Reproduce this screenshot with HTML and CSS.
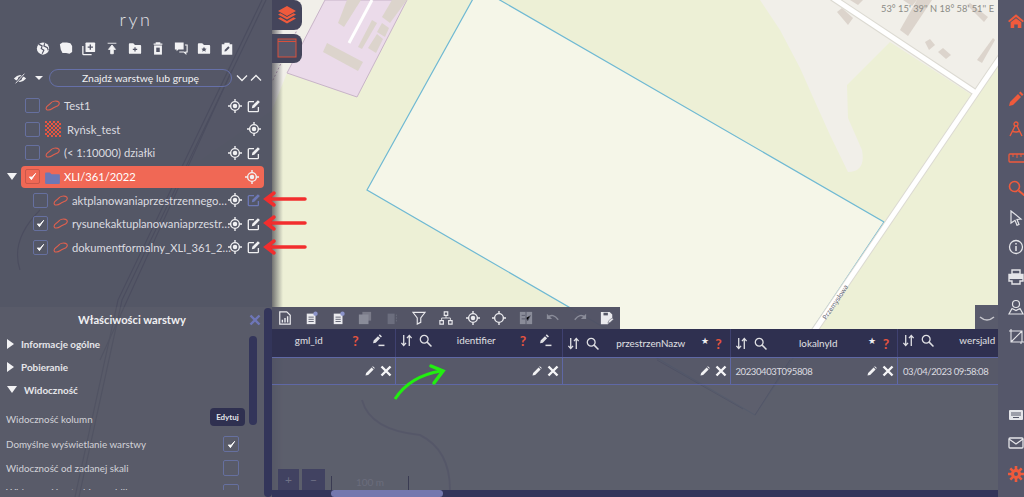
FILE: index.html
```html
<!DOCTYPE html>
<html lang="en">
<head>
    <meta charset="UTF-8">
    <meta name="viewport" content="width=device-width, initial-scale=1.0">
    <title>Właściwości warstwy</title>
    <link rel="stylesheet" href="styles.css">
</head>
<body>

<!-- shared icons -->
<svg class="defs" width="0" height="0">
    <defs>
        <pattern id="hatch" width="4" height="4" patternUnits="userSpaceOnUse">
            <rect width="2" height="2" fill="#e8563f"/>
            <rect x="2" y="2" width="2" height="2" fill="#e8563f"/>
        </pattern>
    </defs>
    <symbol id="i-shape" viewBox="0 0 16 12"><path d="M1 9c0-3 3-3 4.500-5s5-3.500 8-2.500 2 4 0 5-4 1.500-6 3-6.500 2.500-6.500-.5z" fill="none" stroke="currentColor" stroke-width="1.200"/></symbol>
    <symbol id="i-target" viewBox="0 0 16 16"><circle cx="8" cy="8" r="5" fill="none" stroke="currentColor" stroke-width="1.600"/><circle cx="8" cy="8" r="2.600" fill="currentColor"/><path d="M8 0v3M8 13v3M0 8h3M13 8h3" stroke="currentColor" stroke-width="1.600"/></symbol>
    <symbol id="i-edit" viewBox="0 0 16 16"><path d="M13 9v4.500a1 1 0 0 1-1 1H2.500a1 1 0 0 1-1-1V4a1 1 0 0 1 1-1H8" fill="none" stroke="currentColor" stroke-width="1.500"/><path d="M5.500 10.500l.6-2.800 6.400-6.400 2.200 2.200-6.400 6.400z" fill="currentColor"/></symbol>
    <symbol id="i-check" viewBox="0 0 10 10"><path d="M1.500 5.500l2.300 3 4.700-7-3.900 4.300z" fill="#fff" stroke="#fff" stroke-width="1" stroke-linejoin="round"/></symbol>
    <symbol id="i-sort" viewBox="0 0 14 14"><path d="M4 1v11M1.500 9.500L4 12.500l2.500-3M10 13V2M7.500 4.500L10 1.500l2.500 3" fill="none" stroke="currentColor" stroke-width="1.400"/></symbol>
    <symbol id="i-search" viewBox="0 0 12 12"><circle cx="4.800" cy="4.800" r="3.600" fill="none" stroke="currentColor" stroke-width="1.200"/><path d="M7.500 7.500l4 4" stroke="currentColor" stroke-width="1.400"/></symbol>
    <symbol id="i-pen-line" viewBox="0 0 12 12"><path d="M1 8.500l.5-2.500 4-4 2 2-4 4z M6.200 1.300l1-1 2 2-1 1z" fill="currentColor"/><path d="M6 10.500h5.500" stroke="currentColor" stroke-width="1.400"/></symbol>
    <symbol id="i-pen" viewBox="0 0 10 10"><path d="M.5 9.500l.6-2.600 5.500-5.500 2 2-5.500 5.500z M7.200.8l.7-.6 1.900 1.900-.6.7z" fill="currentColor"/></symbol>
    <symbol id="i-x" viewBox="0 0 12 12"><path d="M1.500 1.500l9 9M10.500 1.500l-9 9" stroke="currentColor" stroke-width="2.400"/></symbol>
    <symbol id="i-folder-plus" viewBox="0 0 16 14"><path d="M1 2a1 1 0 0 1 1-1h4l2 2h6a1 1 0 0 1 1 1v8a1 1 0 0 1-1 1H2a1 1 0 0 1-1-1z" fill="currentColor"/><path d="M8 5.500v5M5.500 8h5" stroke="#535566" stroke-width="1.400"/></symbol>
</svg>

<div class="app">
    <!-- map background -->
    <svg class="map" viewBox="0 0 1024 497" aria-hidden="true">
        <rect width="1024" height="497" fill="#edf0d6"/>
        <path d="M200 0H335L287 73L272 110L200 160Z" fill="#f1efe9"/>
        <path d="M780 30L800 68L812 95L830 135L848 172Q866 172 862 150L848 118L847 85L870 62L890 42L975 97L1024 30V0H760Z" fill="#f1efe9"/>
        <path d="M325 0H407L357 97L287 73Z" fill="#ebdbea" stroke="#c8b4c8"/>
        <g fill="#dcd4cc">
            <path d="M347 0H361L344 27L338 23Z"/>
            <path d="M392 0H407L390 23L382 17Z"/>
            <path d="M372 20L377 23L362 49L358 47Z"/>
            <path d="M382 23L389 28L385 37L377 32Z"/>
            <path d="M377 34L383 39L376 53L368 48Z"/>
            <path d="M327 43L363 62L358 71L323 52Z"/>
            <path d="M837 12L842 8L853 18L848 25Z"/>
            <path d="M850 0H863L858 5Z"/>
            <path d="M900 30L917 0H932L908 36Z"/>
            <path d="M903 0H917L912 6Z"/>
            <path d="M925 42L930 39L935 45L929 50Z"/>
            <path d="M938 52L943 48L951 55L946 59Z"/>
            <path d="M977 60L993 38L995 40L982 63Z"/>
            <path d="M967 5L970 3L988 17L984 22Z"/>
        </g>
        <path d="M372 0L349 43" stroke="#fff" stroke-width="3" fill="none"/>
        <path d="M479 -12L884 222L755 415L367 190Z" fill="#f5f6e8" stroke="#6fb9d3" stroke-width="1.200"/>
        <g fill="none" stroke-linecap="round">
            <path d="M833 -2L973 91M1004 52L800 352" stroke="#dcdad2" stroke-width="7"/>
            <path d="M833 -2L973 91M1004 52L800 352" stroke="#fff" stroke-width="5"/>
        </g>
        <text class="road-label" x="0" y="0" transform="translate(826 320) rotate(-56)">Przemysłowa</text>
        <path d="M298 28L272 82" stroke="#b59ab5" stroke-dasharray="2 2"/>
        <!-- railway and roads seen through the panels -->
        <g fill="none" stroke="#2c2d3d" stroke-width="1.200" opacity=".9">
            <path d="M262 0L118 300L75 497"/>
            <path d="M266 0L122 300L79 497"/>
            <path d="M232 70L100 360"/>
            <path d="M20 270Q10 240 40 210"/>
        </g>
        <g fill="none" stroke="#6a6c90" stroke-width="2">
            <path d="M362 400Q370 430 420 435Q450 450 450 490"/>
            <path d="M743 409L657 360M755 415L790 360" stroke="#3c4a78" stroke-width="1"/>
        </g>
    </svg>

    <div class="layout">
        <aside class="sidebar">
            <section class="layers">
                <h1 class="app-title">ryn</h1>
                <div class="tools">
                    <svg viewBox="0 0 16 16"><circle cx="8" cy="8" r="7" fill="currentColor"/><path d="M3 3l4 2-1 3 3 2-2 4M10 2l-1 3 4 2 1 3" fill="none" stroke="#535566" stroke-width="1.300"/></svg>
                    <svg viewBox="0 0 16 16"><path d="M1 3l3-2 5 0 4 1 2 3 0 7-3 2-4-1-4 0-2-4z" fill="currentColor"/></svg>
                    <svg viewBox="0 0 16 16"><path d="M1 5v9a1 1 0 0 0 1 1h9" fill="none" stroke="currentColor" stroke-width="1.500"/><rect x="4" y="1" width="11" height="11" rx="1" fill="currentColor"/><path d="M9.500 3.500v6M6.500 6.500h6" stroke="#535566" stroke-width="1.500"/></svg>
                    <svg viewBox="0 0 16 16"><path d="M3 2h10M8 4l-4 5h2.500v5h3V9H12z" fill="currentColor" stroke="currentColor" stroke-width="1"/></svg>
                    <svg viewBox="0 0 16 14"><use href="#i-folder-plus"/></svg>
                    <svg viewBox="0 0 16 16"><path d="M3 3h10M6 3V1.500h4V3" stroke="currentColor" stroke-width="1.300" fill="none"/><path d="M3.500 4.500h9V15h-9z" fill="currentColor"/><rect x="6" y="7" width="4" height="5" fill="#535566"/></svg>
                    <svg viewBox="0 0 16 16"><path d="M1 1h10v8H5l-2 2V9H1z" fill="currentColor"/><path d="M12.500 4H15v8h-1.500v2l-2-2H6" fill="none" stroke="currentColor" stroke-width="1.300"/></svg>
                    <svg viewBox="0 0 16 14"><path d="M1 2a1 1 0 0 1 1-1h4l2 2h6a1 1 0 0 1 1 1v8a1 1 0 0 1-1 1H2a1 1 0 0 1-1-1z" fill="currentColor"/><path d="M8 5l1 2 2 .2-1.500 1.400.5 2.200-2-1.100-2 1.100.5-2.200L5 7.200 7 7z" fill="#535566"/></svg>
                    <svg viewBox="0 0 16 16"><path d="M2 3h3V1.500h6V3h3v12H2z" fill="currentColor"/><path d="M5 11.500l.5-2 4-4 1.500 1.500-4 4z" fill="#535566"/></svg>
                </div>
                <div class="search-row">
                    <svg class="eye" viewBox="0 0 16 12"><path d="M1 6q7-8 14 0q-7 8-14 0z" fill="currentColor"/><circle cx="8" cy="6" r="2.200" fill="#535566"/><path d="M3 11L13 1" stroke="#535566" stroke-width="2.500"/><path d="M3 11.500L13 .5" stroke="currentColor" stroke-width="1"/></svg>
                    <span class="caret-down small"></span>
                    <div class="search-pill">Znajdź warstwę lub grupę</div>
                    <svg class="chev" viewBox="0 0 12 8"><path d="M1 1.500L6 6.500L11 1.500" fill="none" stroke="currentColor" stroke-width="1.300"/></svg>
                    <svg class="chev" viewBox="0 0 12 8"><path d="M1 6.500L6 1.500L11 6.500" fill="none" stroke="currentColor" stroke-width="1.300"/></svg>
                </div>

                <ul class="tree">
                    <li class="row">
                        <span class="box"></span>
                        <svg class="shape"><use href="#i-shape"/></svg>
                        <span class="name">Test1</span>
                        <svg class="act"><use href="#i-target"/></svg>
                        <svg class="act"><use href="#i-edit"/></svg>
                    </li>
                    <li class="row">
                        <span class="box"></span>
                        <svg class="hatch" viewBox="0 0 16 16"><rect width="16" height="16" fill="url(#hatch)"/></svg>
                        <span class="name">Ryńsk_test</span>
                        <svg class="act"><use href="#i-target"/></svg>
                    </li>
                    <li class="row">
                        <span class="box"></span>
                        <svg class="shape"><use href="#i-shape"/></svg>
                        <span class="name">(&lt; 1:10000) działki</span>
                        <svg class="act"><use href="#i-target"/></svg>
                        <svg class="act"><use href="#i-edit"/></svg>
                    </li>
                    <li class="row row-group">
                        <span class="caret-down"></span>
                        <div class="group-bar">
                            <span class="box checked"><svg><use href="#i-check"/></svg></span>
                            <svg class="folder" viewBox="0 0 16 13"><path d="M0 1.500a1 1 0 0 1 1-1h4l2 2h8a1 1 0 0 1 1 1V12a1 1 0 0 1-1 1H1a1 1 0 0 1-1-1z" fill="#6d78b5"/></svg>
                            <span class="name">XLI/361/2022</span>
                            <svg class="act"><use href="#i-target"/></svg>
                        </div>
                    </li>
                    <li class="row row-child">
                        <span class="box"></span>
                        <svg class="shape"><use href="#i-shape"/></svg>
                        <span class="name">aktplanowaniaprzestrzennego…</span>
                        <svg class="act"><use href="#i-target"/></svg>
                        <svg class="act act-off"><use href="#i-edit"/></svg>
                    </li>
                    <li class="row row-child">
                        <span class="box"><svg><use href="#i-check"/></svg></span>
                        <svg class="shape"><use href="#i-shape"/></svg>
                        <span class="name">rysunekaktuplanowaniaprzestr…</span>
                        <svg class="act"><use href="#i-target"/></svg>
                        <svg class="act"><use href="#i-edit"/></svg>
                    </li>
                    <li class="row row-child">
                        <span class="box"><svg><use href="#i-check"/></svg></span>
                        <svg class="shape"><use href="#i-shape"/></svg>
                        <span class="name">dokumentformalny_XLI_361_2…</span>
                        <svg class="act"><use href="#i-target"/></svg>
                        <svg class="act"><use href="#i-edit"/></svg>
                    </li>
                </ul>
            </section>

            <section class="props">
                <div class="props-main">
                    <div class="props-head">
                        <h2>Właściwości warstwy</h2>
                        <svg class="props-close"><use href="#i-x"/></svg>
                    </div>
                    <div class="props-body">
                        <div class="props-content">
                            <div class="acc"><span class="caret-right"></span>Informacje ogólne</div>
                            <div class="acc"><span class="caret-right"></span>Pobieranie</div>
                            <div class="acc"><span class="caret-down"></span>Widoczność</div>
                            <div class="prop prop-first">Widoczność kolumn <button class="edit-btn">Edytuj</button></div>
                            <div class="prop">Domyślne wyświetlanie warstwy <span class="box"><svg><use href="#i-check"/></svg></span></div>
                            <div class="prop">Widoczność od zadanej skali <span class="box"></span></div>
                            <div class="prop">Widoczność w trybie opublikowanym <span class="box"></span></div>
                        </div>
                        <div class="inner-scroll"></div>
                    </div>
                </div>
                <div class="props-scroll"></div>
            </section>
        </aside>

        <main class="center">
            <div class="float-btns">
                <div class="float-btn">
                    <svg viewBox="0 0 20 20" width="20" height="20"><path d="M10 1l9 5-9 5-9-5z M1 9.500l2.500-1.300L10 12l6.500-3.800L19 9.500l-9 5z M1 13.500l2.500-1.300L10 16l6.500-3.800L19 13.500l-9 5z" fill="#ef5a3c"/></svg>
                </div>
                <div class="float-btn">
                    <svg viewBox="0 0 20 20" width="20" height="20"><rect x="1" y="1" width="18" height="18" fill="#57586b" stroke="#d8503c" stroke-width="1"/><path d="M1 3.500h18" stroke="#d8503c"/></svg>
                </div>
            </div>
            <div class="coords">53° 15' 39'' N 18° 58' 51'' E</div>

            <div class="bottom">
                <div class="table-top">
                    <div class="table-tools">
                        <svg viewBox="0 0 14 16"><path d="M1 1h8l4 4v10H1z" fill="none" stroke="currentColor" stroke-width="1.400"/><path d="M4 13V10M7 13V8M10 13V6" stroke="currentColor" stroke-width="1.600"/></svg>
                        <svg viewBox="0 0 14 16"><rect x="1" y="3" width="10" height="12" fill="currentColor"/><path d="M3 7h6M3 9.500h6M3 12h6" stroke="#555768"/><circle cx="11" cy="3" r="2.500" fill="#8b93c9"/></svg>
                        <svg viewBox="0 0 14 16"><rect x="1" y="3" width="10" height="12" fill="currentColor"/><path d="M3 7h6M3 9.500h6M3 12h6" stroke="#555768"/><circle cx="11" cy="3" r="2.500" fill="#8b93c9"/></svg>
                        <svg class="dim" viewBox="0 0 16 16"><rect x="1" y="4" width="11" height="11" fill="currentColor"/><rect x="5" y="1" width="10" height="10" fill="currentColor" opacity=".7"/></svg>
                        <svg class="faint" viewBox="0 0 16 16"><path d="M3 3h8v12H3z" fill="currentColor"/><path d="M13 4v9" stroke="currentColor" stroke-dasharray="2 1"/></svg>
                        <svg viewBox="0 0 16 16"><path d="M1 1.500h14L10 8v5l-4 2V8z" fill="none" stroke="currentColor" stroke-width="1.300"/></svg>
                        <svg viewBox="0 0 16 16"><path d="M6 1h4v4H6zM1 11h4v4H1zM11 11h4v4h-4z" fill="none" stroke="currentColor" stroke-width="1.300"/><path d="M8 5v3M3 11V8h10v3" fill="none" stroke="currentColor"/></svg>
                        <svg><use href="#i-target"/></svg>
                        <svg viewBox="0 0 16 16"><circle cx="8" cy="8" r="5" fill="none" stroke="currentColor" stroke-width="1.600"/><path d="M8 0v3M8 13v3M0 8h3M13 8h3" stroke="currentColor" stroke-width="1.600"/></svg>
                        <svg class="dim" viewBox="0 0 16 16"><rect x="1" y="1" width="14" height="14" fill="currentColor"/><path d="M3 5h4M3 9h4M8 8l2 3 3-6M8 1v14" stroke="#555768"/></svg>
                        <svg class="dim" viewBox="0 0 16 12"><path d="M2 5q6-5 12 3" fill="none" stroke="currentColor" stroke-width="1.600"/><path d="M1 1v6h6z" fill="currentColor"/></svg>
                        <svg class="dim" viewBox="0 0 16 12"><path d="M14 5q-6-5-12 3" fill="none" stroke="currentColor" stroke-width="1.600"/><path d="M15 1v6H9z" fill="currentColor"/></svg>
                        <svg viewBox="0 0 16 16"><path d="M1 1h10l3 3v5l-5 6H1z" fill="currentColor"/><rect x="4" y="2" width="5" height="3" fill="#555768"/><path d="M9 14l1-3 4-3 1.500 1.500-4 3.500z" fill="currentColor" stroke="#555768" stroke-width=".6"/></svg>
                    </div>
                    <button class="collapse">
                        <svg viewBox="0 0 16 6" width="16" height="6"><path d="M1 1q7 6 14 0" fill="none" stroke="currentColor" stroke-width="1.600"/></svg>
                    </button>
                </div>

                <div class="table-wrap">
                    <div class="table">
                        <div class="t-row t-head">
                            <div class="th">
                                <svg class="th-ic"><use href="#i-sort"/></svg><svg class="th-ic"><use href="#i-search"/></svg>
                                <span class="th-title">gml_id</span>
                                <span class="req">?</span><svg class="th-ic"><use href="#i-pen-line"/></svg>
                            </div>
                            <div class="th">
                                <svg class="th-ic"><use href="#i-sort"/></svg><svg class="th-ic"><use href="#i-search"/></svg>
                                <span class="th-title">identifier</span>
                                <span class="req">?</span><svg class="th-ic"><use href="#i-pen-line"/></svg>
                            </div>
                            <div class="th th-low">
                                <svg class="th-ic"><use href="#i-sort"/></svg><svg class="th-ic"><use href="#i-search"/></svg>
                                <span class="th-title">przestrzenNazw</span>
                                <span class="star">★</span><span class="req">?</span>
                            </div>
                            <div class="th th-low">
                                <svg class="th-ic"><use href="#i-sort"/></svg><svg class="th-ic"><use href="#i-search"/></svg>
                                <span class="th-title">lokalnyId</span>
                                <span class="star">★</span><span class="req">?</span>
                            </div>
                            <div class="th th-last">
                                <svg class="th-ic"><use href="#i-sort"/></svg><svg class="th-ic"><use href="#i-search"/></svg>
                                <span class="th-title">wersjaId</span>
                            </div>
                        </div>
                        <div class="t-row t-body">
                            <div class="td"><span class="val"></span><svg class="td-pen"><use href="#i-pen"/></svg><svg class="td-x"><use href="#i-x"/></svg></div>
                            <div class="td"><span class="val"></span><svg class="td-pen"><use href="#i-pen"/></svg><svg class="td-x"><use href="#i-x"/></svg></div>
                            <div class="td"><span class="val"></span><svg class="td-pen"><use href="#i-pen"/></svg><svg class="td-x"><use href="#i-x"/></svg></div>
                            <div class="td"><span class="val">20230403T095808</span><svg class="td-pen"><use href="#i-pen"/></svg><svg class="td-x"><use href="#i-x"/></svg></div>
                            <div class="td"><span class="val">03/04/2023 09:58:08</span></div>
                        </div>
                    </div>
                </div>

                <div class="table-rest">
                    <div class="zoom-btn">+</div>
                    <div class="zoom-btn">−</div>
                    <div class="scale">100 m</div>
                </div>
                <div class="h-scroll"><div class="h-thumb"></div></div>
            </div>
        </main>

        <nav class="rightbar">
            <svg class="rb-home" viewBox="0 0 18 16"><path d="M9 .5L18 8l-1.500 1.500L9 3.500 1.500 9.500 0 8z" fill="#ef5a3c"/><path d="M3 9.500L9 5l6 4.500V16h-4v-4H7v4H3z" fill="#ef5a3c"/></svg>
            <div class="rb-main">
                <svg class="rb-red" viewBox="0 0 16 16"><path d="M1 15l1-4 8-8 3 3-8 8z M11 2l1.500-1.500 3 3L14 5z" fill="currentColor"/></svg>
                <svg class="rb-red" viewBox="0 0 16 16"><circle cx="8" cy="3" r="2" fill="none" stroke="currentColor" stroke-width="1.300"/><path d="M7 5L2 15M9 5l5 10M4 10q4 2 8 0" fill="none" stroke="currentColor" stroke-width="1.400"/></svg>
                <svg class="rb-red rb-wide" viewBox="0 0 20 10"><rect x="1" y="1" width="22" height="8" rx="1" fill="none" stroke="currentColor" stroke-width="1.300"/><path d="M5 1v3M9 1v4M13 1v3M17 1v4" stroke="currentColor"/></svg>
                <svg class="rb-red" viewBox="0 0 16 16"><circle cx="6.500" cy="6.500" r="5" fill="none" stroke="currentColor" stroke-width="1.600"/><path d="M10.500 10.500l6 5" stroke="currentColor" stroke-width="2"/></svg>
                <svg viewBox="0 0 16 16"><path d="M3 1l10 8-4 .5 2 5-2 .8-2-5L3 13z" fill="none" stroke="currentColor" stroke-width="1.200"/></svg>
                <svg viewBox="0 0 16 16"><circle cx="8" cy="8" r="6.500" fill="none" stroke="currentColor" stroke-width="1.300"/><path d="M8 7v5M8 4v1.500" stroke="currentColor" stroke-width="1.500"/></svg>
                <svg viewBox="0 0 16 16"><path d="M4 1h8v4H4zM1 5.500h14V12h-3v3H4v-3H1z" fill="none" stroke="currentColor" stroke-width="1.400"/><path d="M1 6h14v4H1z" fill="currentColor"/></svg>
                <svg viewBox="0 0 16 16"><circle cx="8" cy="5" r="3.500" fill="none" stroke="currentColor" stroke-width="1.200"/><path d="M4 9.500L1 15h14l-3-5.500-4 2z" fill="none" stroke="currentColor" stroke-width="1.200"/></svg>
                <svg viewBox="0 0 16 16"><path d="M3 2h11v11H3z M3 13L14 2M1 2h2M13 15v-2M3 0v2M14 13h2" fill="none" stroke="currentColor" stroke-width="1.100"/></svg>
            </div>
            <div class="rb-foot">
                <svg viewBox="0 0 16 12"><rect x="1" y="1" width="14" height="10" rx="1" fill="currentColor"/><path d="M3 4h10M3 6h10M5 8.500h6" stroke="#555768"/></svg>
                <svg viewBox="0 0 16 12"><rect x="1" y="1" width="14" height="10" rx="1" fill="none" stroke="currentColor" stroke-width="1.300"/><path d="M1 2l7 5 7-5" fill="none" stroke="currentColor" stroke-width="1.300"/></svg>
                <svg class="rb-red rb-gear" viewBox="0 0 16 16"><circle cx="8" cy="8" r="3.500" fill="none" stroke="currentColor" stroke-width="3"/><path d="M8 0v4M8 12v4M0 8h4M12 8h4M2.300 2.300l3 3M10.700 10.700l3 3M13.700 2.300l-3 3M5.300 10.700l-3 3" stroke="currentColor" stroke-width="2.600"/></svg>
            </div>
        </nav>
    </div>

    <!-- annotations drawn on top of the screenshot -->
    <svg class="notes" viewBox="0 0 1024 497" aria-hidden="true">
        <g fill="none" stroke="#f22e2e" stroke-width="3.500" stroke-linecap="round">
            <path d="M268 199H305M274 193L266 199L274 205"/>
            <path d="M268 223H305M274 217L266 223L274 229"/>
            <path d="M268 247H305M274 241L266 247L274 253"/>
        </g>
        <path d="M395 399Q410 376 441 371" fill="none" stroke="#22ee11" stroke-width="3"/>
        <path d="M431 366L443 371L434 383" fill="none" stroke="#22ee11" stroke-width="3.500" stroke-linecap="round"/>
    </svg>
</div>

</body>
</html>
```

FILE: styles.css
```css
* {
    box-sizing: border-box;
}
html, body {
    margin: 0;
    padding: 0;
}
body {
    font-family: Lato, "Open Sans", sans-serif;
    color: #dcdce0;
    font-size: 12px;
}
.defs {
    display: block;
    height: 0;
}
.app {
    position: relative;
    width: 1024px;
    height: 497px;
    overflow: hidden;
}
.map, .notes {
    position: absolute;
    left: 0;
    top: 0;
    width: 1024px;
    height: 497px;
}
.notes {
    pointer-events: none;
}
.road-label {
    font-family: "Noto Sans", sans-serif;
    font-size: 6.500px;
    fill: #5f6470;
}
.layout {
    position: relative;
    display: flex;
    height: 100%;
}

/* sidebar */
.sidebar {
    width: 272px;
    display: flex;
    flex-direction: column;
    flex-shrink: 0;
}
.layers {
    height: 307px;
    background-color: rgba(76, 78, 96, 0.95);
}
.app-title {
    margin: 0;
    padding-top: 9px;
    height: 38px;
    font-size: 18px;
    font-weight: 300;
    letter-spacing: 2.5px;
    text-align: center;
    color: #e2e2e6;
    line-height: 20px;
}
.tools {
    display: flex;
    gap: 9px;
    padding-left: 36px;
    height: 20px;
    align-items: center;
    color: #f2f2f4;
}
.tools svg {
    width: 14px;
    height: 15px;
}
.search-row {
    display: flex;
    align-items: center;
    height: 18px;
    margin-top: 11px;
    padding-left: 13px;
    color: #f0f0f2;
}
.eye {
    width: 14px;
    height: 11px;
}
.search-pill {
    width: 183px;
    height: 18px;
    margin-left: 6px;
    margin-right: 2px;
    border: 1px solid #6670a8;
    border-radius: 9px;
    text-align: center;
    line-height: 16px;
    font-size: 10.400px;
}
.chev {
    width: 12px;
    height: 8px;
    margin-left: 2px;
}
.caret-down, .caret-right {
    display: inline-block;
    width: 0;
    height: 0;
}
.caret-down {
    border-left: 5px solid transparent;
    border-right: 5px solid transparent;
    border-top: 7px solid #f2f2f4;
}
.caret-down.small {
    margin-left: 8px;
    border-left-width: 4px;
    border-right-width: 4px;
    border-top-width: 4px;
}
.caret-right {
    border-top: 5px solid transparent;
    border-bottom: 5px solid transparent;
    border-left: 7px solid #f2f2f4;
}
.tree {
    list-style: none;
    margin: 7px 0 0;
    padding: 0;
}
.row {
    display: flex;
    align-items: center;
    height: 23.600px;
    padding-left: 25px;
    padding-right: 11px;
}
.row-child {
    padding-left: 33px;
}
.row-group {
    padding-left: 7px;
    padding-right: 8px;
}
.group-bar {
    display: flex;
    align-items: center;
    flex: 1;
    height: 22px;
    margin-left: 4px;
    padding-left: 4px;
    padding-right: 5px;
    background-color: #f06855;
    border-radius: 4px;
    color: #fff;
}
.box {
    display: inline-flex;
    align-items: center;
    justify-content: center;
    width: 15px;
    height: 15px;
    border: 1px solid #66709f;
    border-radius: 2px;
    flex-shrink: 0;
}
.box svg {
    width: 9px;
    height: 9px;
}
.box.checked {
    border-color: #c9574a;
}
.shape {
    width: 15px;
    height: 11px;
    margin-left: 5px;
    color: #e0604e;
    flex-shrink: 0;
}
.hatch {
    width: 16px;
    height: 16px;
    margin-left: 5px;
    flex-shrink: 0;
}
.folder {
    width: 15px;
    height: 12px;
    margin-left: 5px;
    margin-top: 2px;
    flex-shrink: 0;
}
.name {
    flex: 1;
    min-width: 0;
    padding-left: 4px;
    white-space: nowrap;
    font-size: 11.200px;
}
.hatch + .name {
    padding-left: 6px;
}
.act {
    width: 14px;
    height: 14px;
    margin-left: 5px;
    flex-shrink: 0;
    color: #f0f0f2;
}
.act-off {
    color: #6d78b5;
}

/* properties panel */
.props {
    flex: 1;
    display: flex;
    min-height: 0;
    background-color: rgba(82, 84, 100, 0.96);
}
.props-main {
    flex: 1;
    min-width: 0;
    display: flex;
    flex-direction: column;
}
.props-head {
    display: flex;
    align-items: center;
    justify-content: center;
    position: relative;
    height: 25px;
}
.props-head h2 {
    margin: 0;
    font-size: 11.200px;
    font-weight: 700;
    color: #f0f0f2;
}
.props-close {
    position: absolute;
    right: 3px;
    top: 7px;
    width: 12px;
    height: 12px;
    color: #6e76b8;
}
.props-body {
    flex: 1;
    display: flex;
    min-height: 0;
    overflow: hidden;
}
.props-content {
    flex: 1;
    min-width: 0;
    padding-left: 6px;
    padding-right: 4px;
    height: 158px;
    overflow: hidden;
}
.acc {
    display: flex;
    align-items: center;
    gap: 7px;
    height: 23px;
    padding-left: 1px;
    font-weight: 700;
    font-size: 9.900px;
    color: #e6e6ea;
}
.prop {
    display: flex;
    align-items: center;
    justify-content: space-between;
    height: 24px;
    padding-right: 6px;
    font-size: 9.800px;
    color: #d2d2d8;
}
.prop .box {
    width: 16px;
    height: 16px;
}
.prop-first {
    margin-top: 5px;
    padding-right: 0;
    height: 26px;
}
.edit-btn {
    width: 35px;
    height: 18px;
    margin-bottom: 4px;
    padding: 0;
    border: 0;
    border-radius: 4px;
    background-color: #2f3050;
    color: #e4e4e8;
    font-family: inherit;
    font-size: 8px;
    font-weight: 700;
}
.inner-scroll {
    width: 8px;
    height: 89px;
    margin-top: 4px;
    margin-right: 7px;
    background-color: #33355a;
    border-radius: 4px;
}
.props-scroll {
    width: 8px;
    margin-top: 1px;
    background-color: #33355a;
    border-radius: 4px;
}

/* center */
.center {
    position: relative;
    flex: 1;
    min-width: 0;
    display: flex;
    flex-direction: column;
    background: linear-gradient(to right, rgba(60, 60, 70, 0.7), rgba(60, 60, 70, 0) 11px);
}
.float-btns {
    display: flex;
    flex-direction: column;
    gap: 4px;
    width: 30px;
}
.float-btn {
    display: flex;
    align-items: center;
    justify-content: center;
    width: 30px;
    height: 29.500px;
    background-color: #44455b;
    border-radius: 0 8px 8px 0;
}
.coords {
    position: absolute;
    right: 4px;
    top: 3px;
    font-size: 9.300px;
    color: #8b8b86;
}
.bottom {
    margin-top: auto;
    height: 190px;
    display: flex;
    flex-direction: column;
}
.table-top {
    display: flex;
    justify-content: space-between;
    align-items: flex-end;
    height: 22px;
}
.table-tools {
    display: flex;
    align-items: center;
    gap: 12.800px;
    width: 348px;
    height: 22px;
    padding-left: 6px;
    background-color: rgba(78, 80, 98, 0.97);
    color: #eaeaee;
}
.table-tools svg {
    width: 14px;
    height: 14px;
    flex-shrink: 0;
}
.table-tools .dim {
    color: #8a8c99;
}
.table-tools .faint {
    color: #6c6e7e;
}
.collapse {
    width: 23px;
    height: 24px;
    padding: 0;
    border: 0;
    background-color: #595b6c;
    color: #c6c6cc;
}
.table-wrap {
    overflow: hidden;
    background-color: rgba(80, 82, 100, 0.96);
}
.table {
    width: 838px;
    margin-left: -45px;
}
.t-row {
    display: flex;
}
.t-head {
    height: 29px;
    background-color: #2f3050;
    border-bottom: 1px solid #5f68a5;
}
.t-body {
    height: 27px;
    border-bottom: 1px solid #5f68a5;
}
.th, .td {
    width: 167.500px;
    flex-shrink: 0;
    display: flex;
    align-items: center;
    padding-left: 4px;
    padding-right: 6px;
    border-left: 1px solid #3f4170;
}
.td {
    border-left-color: #5f68a5;
    padding-left: 5px;
    padding-right: 3px;
}
.th {
    padding-bottom: 6px;
    color: #e0e0e4;
}
.th-low {
    padding-bottom: 0;
}
.th-ic {
    width: 13px;
    height: 13px;
    margin-right: 9px;
    flex-shrink: 0;
}
.th-ic:first-child {
    margin-right: 6px;
}
.th-title {
    flex: 1;
    min-width: 0;
    padding-right: 6px;
    text-align: center;
    font-size: 9.800px;
    white-space: nowrap;
}
.th-last .th-title {
    padding-right: 47px;
}
.th-ic:last-child {
    margin-right: 4px;
    margin-left: 11px;
}
.req {
    width: 10px;
    color: #e2533f;
    font-size: 14px;
    font-weight: 700;
    text-align: center;
}
.star {
    width: 10px;
    margin-right: 4px;
    margin-top: -6px;
    font-size: 9px;
    color: #f0f0f2;
    text-align: center;
}
.val {
    flex: 1;
    min-width: 0;
    font-size: 9.500px;
    letter-spacing: -.4px;
    white-space: nowrap;
    color: #dcdce0;
}
.td-pen {
    width: 10px;
    height: 10px;
    color: #f2f2f4;
    flex-shrink: 0;
}
.td-x {
    width: 12px;
    height: 12px;
    margin-left: 5px;
    color: #f6f6f8;
    flex-shrink: 0;
}
.table-rest {
    flex: 1;
    display: flex;
    align-items: flex-end;
    gap: 3px;
    padding-left: 6px;
    background-color: rgba(84, 86, 102, 0.95);
}
.zoom-btn {
    width: 21px;
    height: 21px;
    background-color: #414261;
    color: #6f7186;
    text-align: center;
    line-height: 21px;
    font-size: 12px;
}
.zoom-btn + .zoom-btn {
    width: 23px;
}
.scale {
    width: 78px;
    height: 14px;
    margin-left: 3px;
    border-left: 1px solid #3a3b52;
    border-right: 1px solid #3a3b52;
    text-align: center;
    font-size: 10px;
    line-height: 13px;
    color: #6b6d7c;
}
.h-scroll {
    height: 7px;
    background-color: #33355a;
    padding-left: 59px;
}
.h-thumb {
    width: 112px;
    height: 7px;
    background-color: #7478ae;
    border-radius: 4px;
}

/* right toolbar */
.rightbar {
    width: 26px;
    flex-shrink: 0;
    display: flex;
    flex-direction: column;
    padding-left: 10px;
    overflow: hidden;
    background-color: #55576a;
    color: #e4e4e8;
}
.rightbar svg {
    display: block;
    width: 16px;
    height: 16px;
    flex-shrink: 0;
}
.rb-home {
    margin-top: 13px;
}
.rb-main {
    display: flex;
    flex-direction: column;
    gap: 13.700px;
    margin-top: 62px;
}
.rightbar .rb-wide {
    width: 20px;
    height: 10px;
    margin: 3px 0;
}
.rb-red {
    color: #ef5a3c;
}
.rb-foot {
    display: flex;
    flex-direction: column;
    gap: 14px;
    margin-top: auto;
    padding-bottom: 15px;
}
.rightbar .rb-foot svg {
    height: 14px;
}
.rightbar .rb-foot .rb-gear {
    height: 16px;
    margin-top: 2px;
}
```
